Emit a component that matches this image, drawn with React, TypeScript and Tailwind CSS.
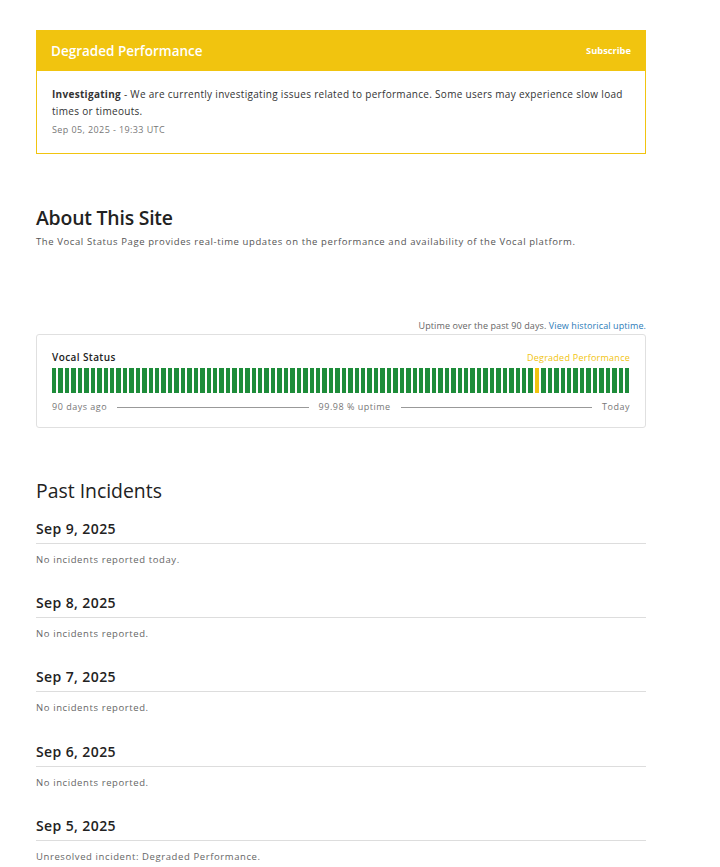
import React from 'react';

const days = Array.from({ length: 90 }, (_, i) => (i === 75 ? 'degraded' : 'ok'));

const incidents = [
  { date: 'Sep 9, 2025', text: 'No incidents reported today.' },
  { date: 'Sep 8, 2025', text: 'No incidents reported.' },
  { date: 'Sep 7, 2025', text: 'No incidents reported.' },
  { date: 'Sep 6, 2025', text: 'No incidents reported.' },
  { date: 'Sep 5, 2025', text: 'Unresolved incident: Degraded Performance.' },
];

export default function App() {
  return (
    <div
      className="min-h-[867px] bg-white text-[#333] border-b-2 border-[#e2e2e2]"
      style={{ fontFamily: '"Open Sans", Lato, sans-serif' }}
    >
      <div className="ml-[36px] w-[610px] pt-[30px] pb-[24px]">
        {/* Active incident */}
        <div className="border border-[#f1c40f]">
          <div className="bg-[#f1c40f] h-[40px] px-[14px] flex items-center justify-between text-white">
            <span className="text-[13.5px] font-semibold">Degraded Performance</span>
            <span className="text-[9.3px] font-bold">Subscribe</span>
          </div>
          <div className="pl-[15px] pr-[13px] pt-[15px] pb-[16px] bg-white">
            <p className="text-[10px] tracking-[0.3px] leading-[17px] text-[#333]">
              <b>Investigating</b> - We are currently investigating issues related to performance. Some users may
              experience slow load times or timeouts.
            </p>
            <p className="text-[9px] tracking-[0.4px] text-[#777] mt-[3px]">Sep 05, 2025 - 19:33 UTC</p>
          </div>
        </div>

        {/* About */}
        <div className="mt-[51px]">
          <h2 className="text-[19.4px] font-semibold text-[#222] leading-[26px] tracking-[-0.2px]">About This Site</h2>
          <p className="text-[9.5px] tracking-[0.6px] text-[#555] mt-[4px]">
            The Vocal Status Page provides real-time updates on the performance and availability of the Vocal platform.
          </p>
        </div>

        {/* Uptime */}
        <div className="mt-[70px]">
          <p className="text-right text-[9px] tracking-[0.1px] text-[#666] mb-[2px]">
            Uptime over the past 90 days. <span className="text-[#2c7cb8]">View historical uptime.</span>
          </p>
          <div className="border border-[#e0e0e0] rounded-[3px] px-[15px] pt-[15px] pb-[13px]">
            <div className="flex items-center justify-between">
              <span className="text-[10px] tracking-[0.4px] font-semibold text-[#222]">Vocal Status</span>
              <span className="text-[9px] tracking-[0.25px] text-[#f1c40f]">Degraded Performance</span>
            </div>
            <div className="flex gap-[2px] h-[25px] mt-[3px]">
              {days.map((d, i) => (
                <div key={i} className={`flex-1 ${d === 'degraded' ? 'bg-[#f1c40f]' : 'bg-[#1e8c3a]'}`} />
              ))}
            </div>
            <div className="flex items-center gap-[10px] mt-[7px] text-[9px] tracking-[0.5px] text-[#777]">
              <span>90 days ago</span>
              <div className="flex-1 h-px bg-[#999]" />
              <span>99.98 % uptime</span>
              <div className="flex-1 h-px bg-[#999]" />
              <span>Today</span>
            </div>
          </div>
        </div>

        {/* Past incidents */}
        <div className="mt-[50px]">
          <h2 className="text-[19.4px] font-normal text-[#222] leading-[26px]">Past Incidents</h2>
          <div className="mt-[14px] flex flex-col gap-[25px]">
            {incidents.map((inc) => (
              <div key={inc.date}>
                <h3 className="text-[14px] tracking-[0.4px] font-semibold text-[#222] leading-[21px] pb-[4px] border-b border-[#ddd]">
                  {inc.date}
                </h3>
                <p className="text-[9.5px] tracking-[0.6px] text-[#666] mt-[9px]">{inc.text}</p>
              </div>
            ))}
          </div>
        </div>
      </div>
    </div>
  );
}
